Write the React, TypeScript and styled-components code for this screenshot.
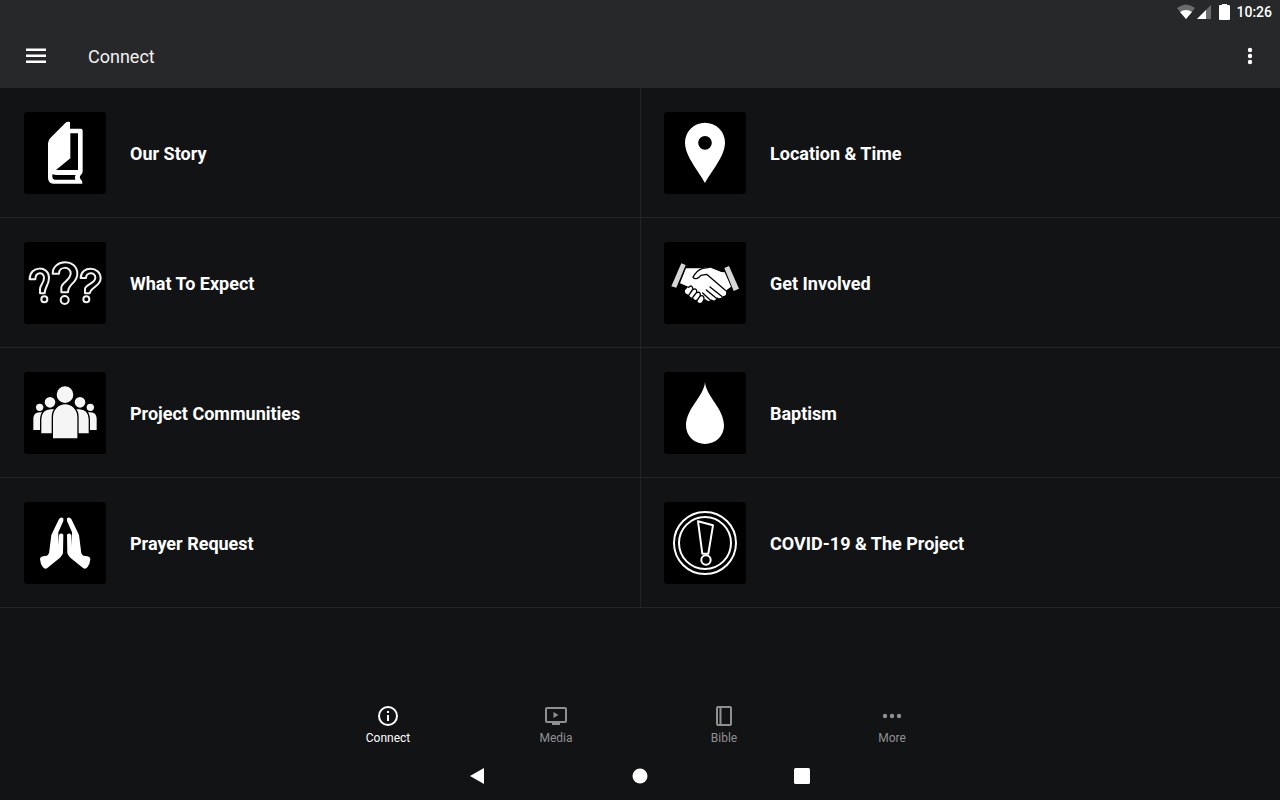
import React from "react";
import styled, { createGlobalStyle } from "styled-components";

const GlobalStyle = createGlobalStyle`
  * { box-sizing: border-box; }
  body {
    margin: 0;
    background: #121315;
    color: #fff;
    font-family: Roboto, "Liberation Sans", sans-serif;
  }
  button { font: inherit; border: 0; padding: 0; background: none; color: inherit; cursor: pointer; }
  svg { display: block; }
`;

const Page = styled.div`
  min-height: 100vh;
  display: flex;
  flex-direction: column;
`;

const Header = styled.header`
  background: #27282a;
`;

const StatusBar = styled.div`
  height: 24px;
  padding: 0 8px;
  display: flex;
  align-items: center;
  justify-content: flex-end;
  font-size: 14px;
  font-weight: 500;
  line-height: 24px;
`;

const StatusIcons = styled.svg`
  width: 56px;
  height: 24px;
  margin-right: 4px;
`;

const Toolbar = styled.div`
  height: 64px;
  padding: 0 18px 0 24px;
  display: flex;
  align-items: center;
`;

const IconButton = styled.button`
  width: 24px;
  height: 24px;
`;

const Title = styled.h1`
  flex: 1;
  margin: 0 0 0 40px;
  padding-top: 2px;
  font-size: 18px;
  font-weight: 400;
  line-height: 24px;
  color: #f1f1f1;
`;

const Grid = styled.main`
  flex: 1;
  display: grid;
  grid-template-columns: 1fr 1fr;
  align-content: start;
`;

const Cell = styled.a`
  display: flex;
  align-items: center;
  gap: 24px;
  padding: 24px 24px 23px;
  border-bottom: 1px solid #242527;
  color: inherit;
  text-decoration: none;

  &:nth-child(even) {
    padding-left: 23px;
    border-left: 1px solid #242527;
  }
`;

const CellLabel = styled.span`
  padding-top: 2px;
  font-size: 18px;
  font-weight: 700;
  line-height: 24px;
`;

const Tile = styled.svg`
  width: 82px;
  height: 82px;
  flex: none;
  border-radius: 3px;
  background: #000;
`;

const Tabs = styled.nav`
  display: flex;
  justify-content: center;
`;

const Tab = styled.button<{ $active?: boolean }>`
  width: 168px;
  height: 56px;
  padding-top: 8px;
  display: flex;
  flex-direction: column;
  align-items: center;
  gap: 2px;
  font-size: 12px;
  line-height: 16px;
  && { color: ${(p) => (p.$active ? "#fff" : "#8f9092")}; }
`;

const SystemBar = styled.nav`
  height: 48px;
  display: flex;
  justify-content: center;
  align-items: center;
  gap: 138px;
`;

const items: { label: string; art: React.ReactNode }[] = [
  {
    label: "Our Story",
    art: (
      <g fill="#fff">
        <path d="M84 106Q84 97 91 90L136 45Q142 39 150 42V62H183Q188 62 188 68V190Q188 197 183 200Q176 207 183 215Q188 218 187 227H100Q84 225 84 209Z" />
        <path d="M151 76H174V186H108L151 151Z" fill="#000" />
        <path d="M97 199Q104 201 110 201H167Q162 207 166 215H104Q97 213 97 206Z" fill="#000" />
      </g>
    ),
  },
  {
    label: "Location & Time",
    art: (
      <path
        fill="#fff"
        fillRule="evenodd"
        d="M135 225C120 195 75 145 75 104A60 60 0 0 1 195 104C195 145 150 195 135 225ZM135 84A20.500 20.500 0 1 0 135 125A20.500 20.500 0 1 0 135 84Z"
      />
    ),
  },
  {
    label: "What To Expect",
    art: (
      <g fill="none" stroke="#f2f2f2" strokeWidth="6" strokeLinejoin="round">
        <path d="M98 107C98 63 172 60 172 107C172 137 144 135 144 163H124V149C124 133 152 128 152 106C152 84 117 84 117 107Z" />
        <circle cx="134" cy="186" r="12" />
        <path d="M29 124C29 81 87 83 87 119C87 142 74 147 74 166H60V154C60 141 72 135 72 120C72 100 46 101 46 124Z" />
        <circle cx="73" cy="184" r="9" />
        <path d="M182 120C182 82 242 83 242 121C242 145 213 147 209 166H195V153C195 139 226 137 226 119C226 100 198 102 198 120Z" />
        <circle cx="199" cy="184" r="9" />
      </g>
    ),
  },
  {
    label: "Get Involved",
    art: (
      <g>
        <path d="M64 76L77 81L49 149L34 145Z" fill="#d7d7d7" />
        <path d="M193 90L207 84L237 152L221 159Z" fill="#d7d7d7" />
        <path
          fill="#fff"
          d="M78 91H115L128 90L148 88L184 102L194 103L213 146L197 158Q203 173 188 175Q181 185 171 178Q165 193 154 184Q145 194 137 184L130 184Q127 195 119 195Q110 193 113 184Q101 190 99 178Q89 180 88 170Q73 170 75 157L85 146L60 136Z"
        />
        <g fill="none" stroke="#000" strokeWidth="4" strokeLinecap="round" strokeLinejoin="round">
          <path d="M148 88L128 91C112 96 104 108 99 118C106 126 116 120 123 112L140 109L196 157" />
          <path d="M150 147L185 175M139 156L168 180M128 165L150 185" />
          <path d="M86 148Q96 138 99 153L88 169M99 155Q111 148 110 163L99 177M110 164Q122 159 121 173L112 186M121 174Q132 170 132 183" />
        </g>
      </g>
    ),
  },
  {
    label: "Project Communities",
    art: (
      <g fill="#f5f5f5">
        <circle cx="59" cy="118" r="11" />
        <circle cx="211" cy="118" r="11" />
        <path d="M40 186V151Q41 133 59 133H74V186ZM196 133H211Q229 133 230 151V186H196Z" />
        <g stroke="#000" strokeWidth="4">
          <circle cx="90" cy="103" r="18" />
          <circle cx="180" cy="103" r="18" />
          <path d="M62 198V154Q64 122 92 122H112V198ZM158 122H178Q206 122 208 154V198H158Z" />
          <circle cx="135" cy="80" r="27" />
          <path d="M97 213V147A38.500 40 0 0 1 174 147V213Z" />
        </g>
      </g>
    ),
  },
  {
    label: "Baptism",
    art: <path fill="#fff" d="M135 41C137 84 192 120 192 173A57 55 0 0 1 78 173C78 120 133 84 135 41Z" />,
  },
  {
    label: "Prayer Request",
    art: (
      <g fill="#fff">
        <path
          id="hand"
          d="M117 63Q123 55 130 61L130 69L115 103L115 143L117 111Q123 103 130 110L129 165Q127 173 120 179L81 211Q74 215 69 208Q61 198 60 184Q60 177 69 175L80 173Q88 169 88 158L94 111Z"
        />
        <use href="#hand" transform="translate(271 0) scale(-1 1)" />
      </g>
    ),
  },
  {
    label: "COVID-19 & The Project",
    art: (
      <g fill="none" stroke="#fff" strokeWidth="6">
        <circle cx="135" cy="135" r="93" />
        <circle cx="135" cy="135" r="78" />
        <path d="M114 70L159 82L145 167H127Z" strokeLinejoin="round" />
        <circle cx="138" cy="186" r="14" />
      </g>
    ),
  },
];

const tabs: { label: string; art: React.ReactNode }[] = [
  {
    label: "Connect",
    art: (
      <>
        <circle cx="12" cy="12" r="9" fill="none" stroke="currentColor" strokeWidth="2" />
        <path d="M11 7h2v2h-2zM11 11h2v6h-2z" />
      </>
    ),
  },
  {
    label: "Media",
    art: (
      <>
        <path d="M21 3H3a2 2 0 0 0-2 2v12a2 2 0 0 0 2 2h5v2h8v-2h5a2 2 0 0 0 2-2V5a2 2 0 0 0-2-2zm0 14H3V5h18z" />
        <path d="M9.500 8v6l5-3z" />
      </>
    ),
  },
  {
    label: "Bible",
    art: (
      <path
        fillRule="evenodd"
        d="M6 2h12a2 2 0 0 1 2 2v16a2 2 0 0 1-2 2H6a2 2 0 0 1-2-2V4a2 2 0 0 1 2-2zM6 4v16h1.500V4zM9.500 4v16H18V4z"
      />
    ),
  },
  {
    label: "More",
    art: (
      <>
        <circle cx="5" cy="12" r="2.200" />
        <circle cx="12" cy="12" r="2.200" />
        <circle cx="19" cy="12" r="2.200" />
      </>
    ),
  },
];

const system = [
  { label: "Back", art: <path d="M4 12L18 4v16z" /> },
  { label: "Home", art: <circle cx="12" cy="12" r="7.500" /> },
  { label: "Recent apps", art: <rect x="4" y="4" width="16" height="16" rx="1.500" /> },
];

const Glyph = ({ children }: { children: React.ReactNode }) => (
  <svg width="24" height="24" viewBox="0 0 24 24" fill="currentColor" aria-hidden="true">
    {children}
  </svg>
);

export default function App() {
  return (
    <Page>
      <GlobalStyle />
      <Header>
        <StatusBar>
          <StatusIcons viewBox="0 0 56 24" fill="#fff" aria-hidden="true">
            <path d="M1 8Q10 1 19 8L10 19Z" fill="#6b6c6d" />
            <path d="M4 12Q10 8 16 12L10 19Z" />
            <path d="M35 5V19H21Z" fill="#6b6c6d" />
            <path d="M30 10V19H21Z" />
            <path d="M46 4h5v1h2a1 1 0 0 1 1 1v13a1 1 0 0 1-1 1h-9a1 1 0 0 1-1-1V6a1 1 0 0 1 1-1h2z" />
          </StatusIcons>
          <span>10:26</span>
        </StatusBar>
        <Toolbar>
          <IconButton aria-label="Menu">
            <Glyph>
              <path d="M2 4.500h20V7H2zM2 10.500h20V13H2zM2 16.500h20V19H2z" />
            </Glyph>
          </IconButton>
          <Title>Connect</Title>
          <IconButton aria-label="More options">
            <Glyph>
              <circle cx="12" cy="6" r="2.200" />
              <circle cx="12" cy="12" r="2.200" />
              <circle cx="12" cy="18" r="2.200" />
            </Glyph>
          </IconButton>
        </Toolbar>
      </Header>
      <Grid>
        {items.map((item) => (
          <Cell key={item.label} href="#">
            <Tile viewBox="12 12 246 246" aria-hidden="true">
              {item.art}
            </Tile>
            <CellLabel>{item.label}</CellLabel>
          </Cell>
        ))}
      </Grid>
      <Tabs>
        {tabs.map((tab, i) => (
          <Tab key={tab.label} $active={i === 0}>
            <Glyph>{tab.art}</Glyph>
            {tab.label}
          </Tab>
        ))}
      </Tabs>
      <SystemBar>
        {system.map((s) => (
          <IconButton key={s.label} aria-label={s.label}>
            <Glyph>{s.art}</Glyph>
          </IconButton>
        ))}
      </SystemBar>
    </Page>
  );
}
